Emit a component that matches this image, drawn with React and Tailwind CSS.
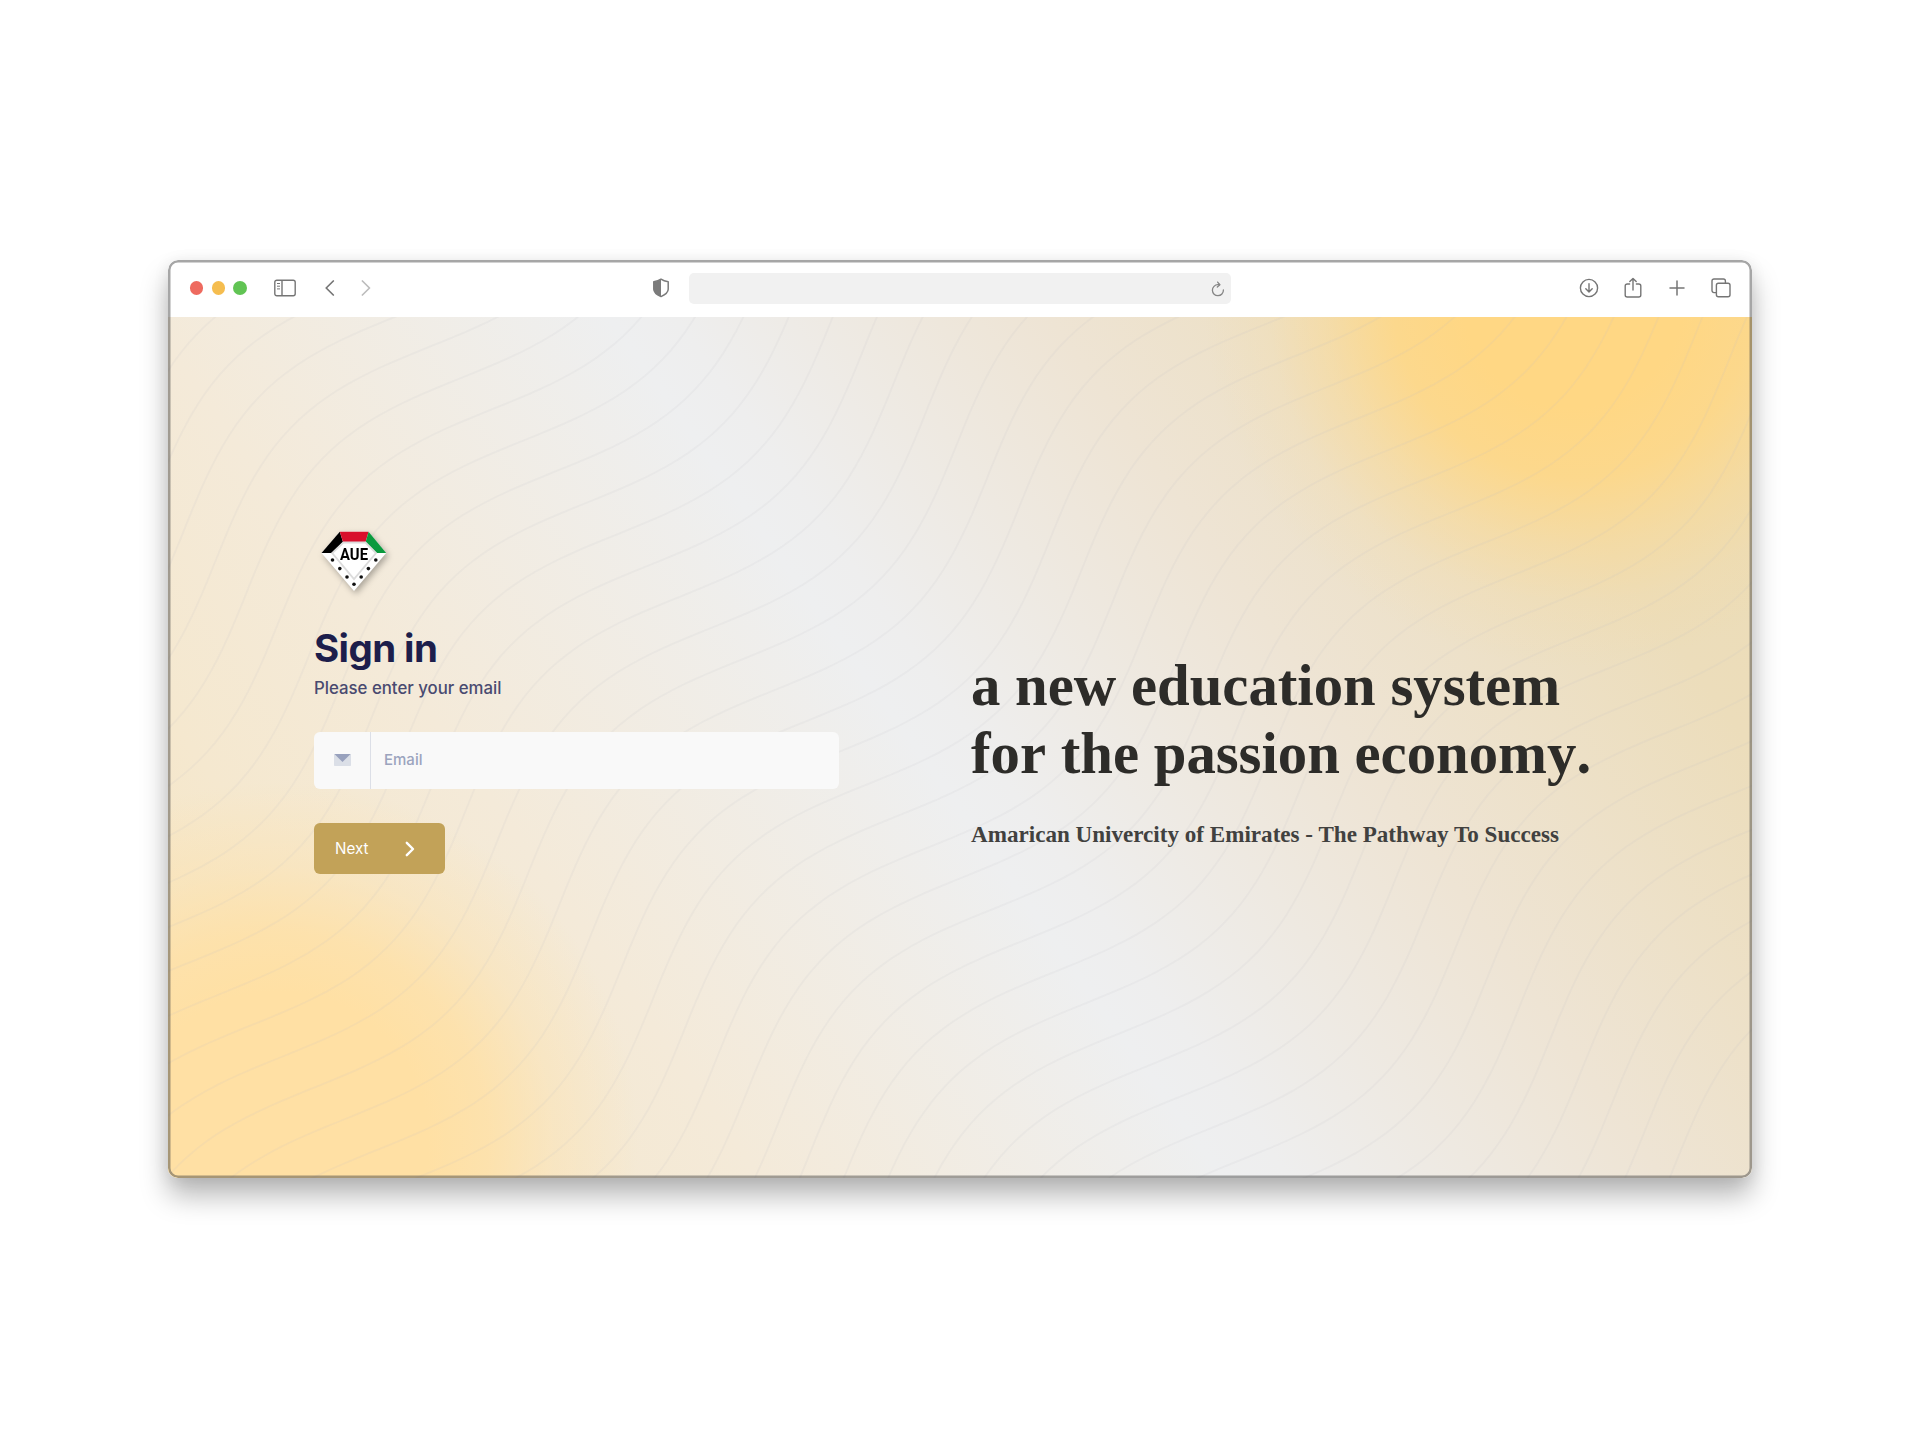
import React from "react";

const R = Math.SQRT1_2;

// One wave of the background pattern, running from bottom-left to top-right.
function wavePath(n) {
  const pts = [];
  for (let t = -1500; t <= 1700; t += 12) {
    const d = 44.2 * n + 41 * Math.sin((2 * Math.PI * t) / 606);
    pts.push(`${(418 + R * (t + d)).toFixed(1)} ${(186 + R * (d - t)).toFixed(1)}`);
  }
  return "M" + pts.join("L");
}

const WAVES = Array.from({ length: 48 }, (_, i) => wavePath(i - 19));

function Waves() {
  return (
    <svg className="absolute inset-0 h-full w-full" viewBox="0 0 1584 861" fill="none" stroke="#bcc0c8" strokeOpacity="0.12" strokeWidth="1.8">
      {WAVES.map((d, i) => (
        <path key={i} d={d} />
      ))}
    </svg>
  );
}

function Toolbar() {
  return (
    <div className="relative flex h-[57px] shrink-0 items-center bg-white pb-px text-[#757575]">
      <div className="ml-[22px] flex gap-[8.4px]">
        <span className="size-[13.3px] rounded-full bg-[#ee6a5f]" />
        <span className="size-[13.3px] rounded-full bg-[#f5bd4f]" />
        <span className="size-[13.3px] rounded-full bg-[#61c454]" />
      </div>
      <svg className="ml-[27px] h-[18px] w-[22px]" viewBox="0 0 22 18" fill="none" stroke="currentColor">
        <rect x="0.8" y="1.2" width="20.4" height="15.6" rx="2" strokeWidth="1.4" />
        <path d="M8 1.2v15.6" strokeWidth="1.4" />
        <path d="M3 4.5h3M3 7.2h3M3 9.9h3" strokeWidth="1" />
      </svg>
      <svg className="ml-[29.5px] h-4 w-[10px]" viewBox="0 0 10 16" fill="none" stroke="currentColor" strokeWidth="1.7" strokeLinecap="round" strokeLinejoin="round">
        <path d="M8.3 1L1.2 8l7.1 7" />
      </svg>
      <svg className="ml-[25.5px] h-4 w-[10px]" viewBox="0 0 10 16" fill="none" stroke="#bcbcbc" strokeWidth="1.7" strokeLinecap="round" strokeLinejoin="round">
        <path d="M1.4 1l7.1 7-7.1 7" />
      </svg>
      <svg className="ml-[281px] h-[20px] w-[18px]" viewBox="0 0 18 20" fill="none">
        <path d="M9 1.2C7 2.7 4 3.5 1.8 3.7v7.6c0 3.6 3.4 5.6 7.2 7.3 3.8-1.7 7.2-3.7 7.2-7.3V3.7C14 3.5 11 2.7 9 1.2z" stroke="#7b7b7b" strokeWidth="1.5" strokeLinejoin="round" />
        <path d="M9 1.2C7 2.7 4 3.5 1.8 3.7v7.6c0 3.6 3.4 5.6 7.2 7.3z" fill="#7b7b7b" />
      </svg>
      <div className="mt-px ml-[19px] flex h-[31px] w-[542px] items-center justify-end rounded-[5px] bg-[#f1f1f1] pr-[6px]">
        <svg className="mt-px h-4 w-[14px]" viewBox="0 0 14 16" fill="none" stroke="#858585" strokeWidth="1.3" strokeLinecap="round" strokeLinejoin="round">
          <path d="M12.4 9A5.5 5.5 0 1 1 6.9 3.7h1.6" />
          <path d="M6.6 1.1l2.3 2.6L6.300 6" />
        </svg>
      </div>
      <div className="ml-auto flex items-center pr-[21px]">
        <svg className="h-5 w-5" viewBox="0 0 20 20" fill="none" stroke="currentColor" strokeWidth="1.4" strokeLinecap="round" strokeLinejoin="round">
          <circle cx="10" cy="10" r="8.6" />
          <path d="M10 5.8v8M6.8 10.8L10 14l3.2-3.2" />
        </svg>
        <svg className="ml-[25px] h-[22px] w-[18px]" viewBox="0 0 18 22" fill="none" stroke="currentColor" strokeWidth="1.4" strokeLinecap="round" strokeLinejoin="round">
          <path d="M5.6 7H3.2a2 2 0 0 0-2 2v9a2 2 0 0 0 2 2h11.6a2 2 0 0 0 2-2V9a2 2 0 0 0-2-2h-2.4" />
          <path d="M9 13V1.6M5.8 4.6L9 1.4l3.2 3.2" />
        </svg>
        <svg className="ml-[27px] h-4 w-4" viewBox="0 0 16 16" fill="none" stroke="currentColor" strokeWidth="1.5" strokeLinecap="round">
          <path d="M8 1v14M1 8h14" />
        </svg>
        <svg className="ml-[26px] h-5 w-5" viewBox="0 0 20 20" fill="none" stroke="currentColor" strokeWidth="1.4" strokeLinejoin="round">
          <rect x="5.4" y="5.2" width="13.6" height="13.6" rx="2" />
          <path d="M5.4 14.6H3a2 2 0 0 1-2-2V3a2 2 0 0 1 2-2h9.4a2 2 0 0 1 2 2v2.2" />
        </svg>
      </div>
    </div>
  );
}

function Logo() {
  return (
    <svg className="ml-[7px] block h-[62px] w-[66px] overflow-visible drop-shadow-[2px_3px_3px_rgba(0,0,0,0.3)]" viewBox="0 0 66 62">
      <path d="M18.8 0.8h28.8L65.2 22 33 60 0.5 22z" fill="#fff" />
      <path d="M18.8 0.8L22 11 10.6 22H0.5z" fill="#000" />
      <path d="M18.8 0.8h28.8L44.6 11H22z" fill="#d80f2c" />
      <path d="M47.6 0.8L65.2 22h-9.6L44.6 11z" fill="#0a9a3e" />
      <path d="M22.4 11.5h22L55 22 33 48 11.2 22z" fill="#fff" stroke="#dcdcdc" strokeWidth="1.8" />
      {[[11.5, 29], [18.8, 37.6], [26, 46], [33, 53.2], [40.2, 46], [47.4, 37.6], [54.8, 29]].map(([x, y]) => (
        <circle key={x} cx={x} cy={y} r="1.8" fill="#111" />
      ))}
      <text x="19" y="28.5" textLength="28" lengthAdjust="spacingAndGlyphs" className="fill-black font-[Roboto] text-[17px] font-bold">
        AUE
      </text>
    </svg>
  );
}

function SignIn() {
  return (
    <div className="ml-[146px] flex w-[525px] flex-col pt-[214px] font-[Inter,sans-serif] [font-optical-sizing:none]">
      <Logo />
      <h1 className="mt-[31px] text-[38.500px] leading-[48px] font-bold tracking-[-0.6px] text-[#1d1e4b]">Sign in</h1>
      <p className="mt-[4px] text-[16.8px] leading-[24px] font-medium text-[#494a70]">Please enter your email</p>
      <div className="mt-[32px] flex h-[57px] rounded-[6px] bg-[#f9f9f9]">
        <div className="flex w-[57px] items-center justify-center border-r border-[#dcdfe7]">
          <svg className="mb-px h-[12px] w-[17px]" viewBox="0 0 17 12">
            <rect width="17" height="12" rx="0.8" fill="#dbdfe7" />
            <path d="M0.4 0h16.2L8.5 8z" fill="#98a1bd" />
          </svg>
        </div>
        <span className="pl-[13px] text-[15px] leading-[56px] font-medium text-[#9ba4be]">Email</span>
      </div>
      <button className="mt-[34px] flex h-[51px] w-[131px] items-center rounded-[6px] bg-[#c2a258] pl-[21px] text-[15.2px] text-white">
        <span className="pt-px">Next</span>
        <svg className="ml-[36px] h-4 w-[10px]" viewBox="0 0 10 16" fill="none" stroke="#fff" strokeWidth="2.4" strokeLinecap="round" strokeLinejoin="round">
          <path d="M1.8 1.8L8 8l-6.2 6.2" />
        </svg>
      </button>
    </div>
  );
}

export default function App() {
  return (
    <div className="flex h-[1440px] w-[1920px] justify-center bg-white pt-[260px]">
      <div className="relative flex h-[918px] w-[1584px] flex-col overflow-hidden rounded-[10px] shadow-[0_18px_28px_rgba(0,0,0,0.28),0_2px_16px_rgba(0,0,0,0.08)]">
        <Toolbar />
        <div className="relative flex flex-1 bg-[radial-gradient(circle_at_1405px_-20px,#ffd784_0,#ffd784_110px,rgba(255,215,132,0.85)_180px,rgba(255,215,132,0.4)_248px,rgba(255,215,132,0.12)_305px,rgba(255,215,132,0)_370px),radial-gradient(circle_at_110px_825px,#ffe0a4_0,#ffe0a4_150px,rgba(255,224,164,0.8)_210px,rgba(255,224,164,0.35)_275px,rgba(255,224,164,0)_360px),linear-gradient(54.5deg,#f7e4bd_0%,#f5e8cf_15%,#f4ead9_27%,#eeeff0_48%,#eeeeee_51%,#eee4d4_68%,#ecddbb_86%,#ecdcb4_100%)]">
          <Waves />
          <div className="relative flex">
            <SignIn />
            <div className="ml-[132px] pt-[335px] font-['Liberation_Serif',serif] font-bold">
              <h2 className="text-[58.75px] leading-[68px] whitespace-nowrap text-[#2d2c29] [font-kerning:none]">
                a new education system
                <br />
                for the passion economy.
              </h2>
              <p className="mt-[30px] text-[23.1px] leading-[32px] whitespace-nowrap text-[#41413f]">Amarican Univercity of Emirates - The Pathway To Success</p>
            </div>
          </div>
        </div>
        <div className="pointer-events-none absolute inset-0 rounded-[10px] shadow-[inset_0_0_0_2.5px_rgba(70,70,70,0.48)]" />
      </div>
    </div>
  );
}
